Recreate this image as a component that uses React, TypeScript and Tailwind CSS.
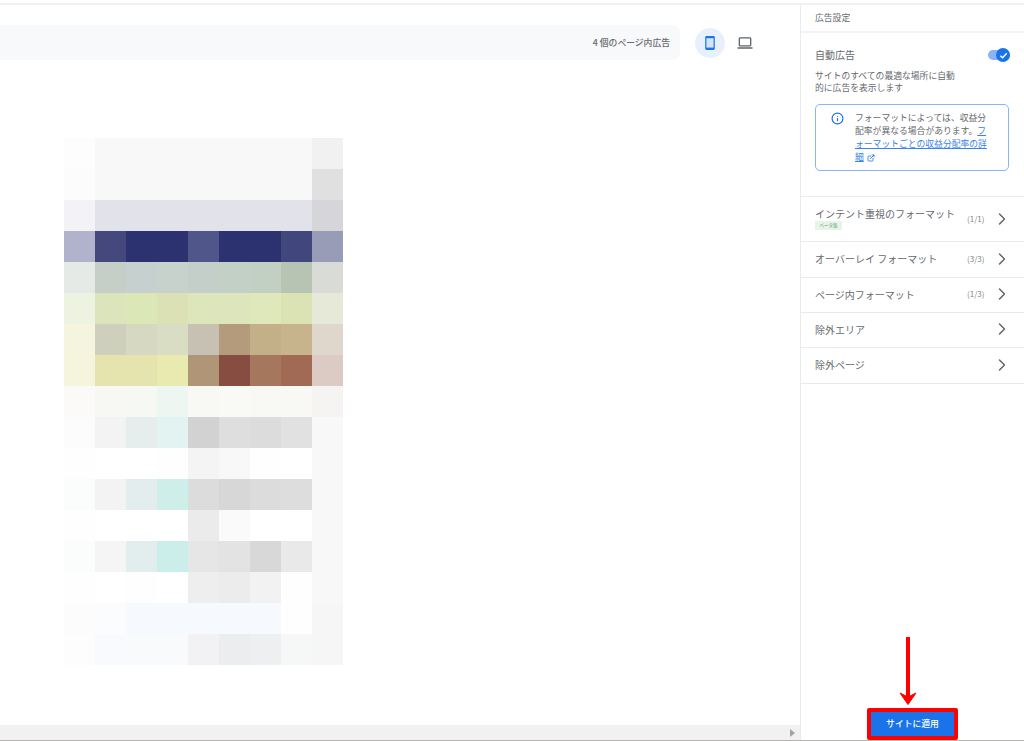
import { ChevronRight, ExternalLink, Info } from 'lucide-react';

const mosaic = [
  ['#fdfdfd', '#f8f8f8', '#f8f8f8', '#f8f8f8', '#f8f8f8', '#f8f8f8', '#f8f8f8', '#f8f8f8', '#f1f1f1'],
  ['#fcfcfc', '#f8f8f8', '#f8f8f8', '#f8f8f8', '#f8f8f8', '#f8f8f8', '#f8f8f8', '#f8f8f8', '#e0e0e0'],
  ['#f3f3f7', '#e2e3ea', '#e2e3ea', '#e2e3ea', '#e2e3ea', '#e2e3ea', '#e2e3ea', '#e2e3ea', '#d6d6da'],
  ['#b1b3cd', '#45487c', '#2c316f', '#2c316f', '#50558a', '#2c316f', '#2c316f', '#41467c', '#999cb6'],
  ['#e5eae7', '#c5cfc8', '#c6d0cf', '#c8d2cd', '#c3cfc8', '#c2d0c5', '#c2d0c3', '#b8c4b3', '#d9dcd6'],
  ['#eef2e0', '#dbe4bb', '#dce7b8', '#dbe0b5', '#dde6bb', '#dce5bb', '#dee8bb', '#dbe2b3', '#e6e9d8'],
  ['#f5f5df', '#cfcfbe', '#d7d8c1', '#d9ddc3', '#c7c1b4', '#b39b7c', '#c3af88', '#c7b48c', '#dfd7cb'],
  ['#f5f5dd', '#e6e4ae', '#e6e4ae', '#e8eab0', '#ae9676', '#874d40', '#a5785e', '#a06a55', '#dbcbc4'],
  ['#fbfaf8', '#f7f8f4', '#f6f8f4', '#eef6f2', '#f8f9f5', '#f9faf6', '#f8f9f5', '#f8f9f5', '#f5f4f3'],
  ['#fcfcfc', '#f3f3f3', '#e5eded', '#e2f3f2', '#d2d2d2', '#dedede', '#dcdcdc', '#e1e1e1', '#f8f8f8'],
  ['#fefefe', '#ffffff', '#ffffff', '#fefefe', '#f4f4f4', '#f8f8f8', '#fefefe', '#ffffff', '#f8f8f8'],
  ['#fbfdfc', '#f3f3f3', '#e3eded', '#cdeee9', '#dcdcdc', '#d7d7d7', '#dcdcdc', '#dddddd', '#f8f8f8'],
  ['#fefefe', '#ffffff', '#ffffff', '#ffffff', '#ebebeb', '#fafafa', '#ffffff', '#ffffff', '#f8f8f8'],
  ['#fbfdfc', '#f5f5f5', '#e2eded', '#cbeeea', '#e6e6e6', '#e3e3e3', '#d8d8d8', '#e9e9e9', '#f8f8f8'],
  ['#fefefe', '#ffffff', '#fefefe', '#ffffff', '#eeeeee', '#ececec', '#f2f2f2', '#fefefe', '#f8f8f8'],
  ['#fcfcfc', '#fbfcfe', '#f6f9fe', '#f6f9fe', '#f6f9fe', '#f6f9fe', '#f6f9fe', '#fefefe', '#f6f6f6'],
  ['#fdfdfd', '#f8fafd', '#f8fafc', '#f9fafc', '#f2f2f4', '#ecedef', '#eeeff1', '#f6f7f7', '#f6f6f6'],
];

const formatRows = [
  { label: 'オーバーレイ フォーマット', count: '(3/3)', height: 'h-[36px]' },
  { label: 'ページ内フォーマット', count: '(1/3)', height: 'h-[35px]' },
  { label: '除外エリア', count: '', height: 'h-[35px]' },
  { label: '除外ページ', count: '', height: 'h-[36px]' },
];

function Mosaic() {
  return (
    <svg width="279" height="527" viewBox="0 0 279 527" shapeRendering="crispEdges" className="ml-16 mt-[78px] block">
      {mosaic.map((row, y) =>
        row.map((color, x) => <rect key={`${x}-${y}`} x={x * 31} y={y * 31} width="31" height="31" fill={color} />),
      )}
    </svg>
  );
}

// material style phone, the inner screen is tinted
function PhoneIcon() {
  return (
    <svg width="18" height="18" viewBox="0 0 18 18">
      <rect x="4.2" y="2" width="9.6" height="14" rx="1.4" fill="#1a73e8" />
      <rect x="5.4" y="4.2" width="7.2" height="9.4" fill="#d2e3fc" />
    </svg>
  );
}

function LaptopIcon() {
  return (
    <svg width="16" height="16" viewBox="0 0 16 16" fill="none" stroke="#5f6368">
      <rect x="2.3" y="2.9" width="11.4" height="8" rx="0.8" strokeWidth="1.3" />
      <path d="M0.5 13H15.5" strokeWidth="1.5" />
    </svg>
  );
}

export default function App() {
  return (
    <div
      className="relative flex h-[741px] w-[1024px] flex-col overflow-hidden bg-white text-[#666a6e]"
      style={{ fontFamily: '"Noto Sans CJK JP", "Liberation Sans", sans-serif' }}
    >
      <div className="mt-[3px] h-[2px] bg-[#f1f1f1]" />
      <div className="flex min-h-0 flex-1">
        <div className="flex w-[800px] flex-col">
          <div className="mt-5 flex items-center">
            <div className="flex h-[35px] w-[680px] items-center justify-end rounded-r-lg bg-[#f8f9fa] pr-[10px] text-[8.8px] font-medium">
              4 個のページ内広告
            </div>
            <div className="ml-[15px] flex h-[30px] w-[30px] items-center justify-center rounded-full bg-[#e8f0fe]">
              <PhoneIcon />
            </div>
            <div className="ml-[12px]">
              <LaptopIcon />
            </div>
          </div>
          <Mosaic />
          <div className="mt-auto flex h-[15px] items-center justify-end bg-[#f1f1f1] pr-[5px]">
            <div className="h-0 w-0 border-y-[4px] border-l-[5px] border-y-transparent border-l-[#a3a3a3]" />
          </div>
        </div>

        <div className="flex w-[224px] flex-col border-l border-[#e8eaed]">
          <div className="flex h-[28px] items-center border-b-2 border-[#f1f3f4] pl-[14px] text-[8.8px]">広告設定</div>
          <div className="h-[164px] border-b border-[#e8eaed] pl-[14px] pr-[14px] pt-[14px]">
            <div className="flex items-center justify-between">
              <span className="text-[10px] leading-4">自動広告</span>
              <div className="relative h-[10px] w-[22px] rounded-full bg-[#8ab4f8]">
                <div className="absolute right-0 top-[-2px] flex h-[14px] w-[14px] items-center justify-center rounded-full bg-[#1a73e8]">
                  <svg width="9" height="9" viewBox="0 0 10 10" fill="none" stroke="white" strokeWidth="1.6">
                    <path d="M1.5 5.2 4 7.6 8.6 2.6" />
                  </svg>
                </div>
              </div>
            </div>
            <p className="mt-[7px] w-[145px] text-[8.8px] leading-3">サイトのすべての最適な場所に自動的に広告を表示します</p>
            <div className="mt-[10px] flex h-[67px] w-[194px] rounded-[5px] border border-[#8ab4f8] pl-[15px] pr-[18px] pt-[6px]">
              <Info size={13} strokeWidth={2.2} className="mt-[1px] shrink-0 text-[#1a73e8]" />
              <p className="ml-[11px] text-[8.8px] leading-[13px]">
                フォーマットによっては、収益分配率が異なる場合があります。
                <span className="text-[#3b82e8] underline">フォーマットごとの収益分配率の詳細</span>
                <ExternalLink size={8} strokeWidth={2.4} className="ml-[3px] inline text-[#1a73e8]" />
              </p>
            </div>
          </div>

          <div className="flex h-[45px] items-center border-b border-[#e8eaed] pl-[14px]">
            <div className="w-[148px]">
              <div className="text-[10px] leading-[12px]">インテント重視のフォーマット</div>
              <div className="mt-[1px] flex h-[9px] w-[27px] items-center justify-center bg-[#e6f4ea] text-[4.5px] text-[#5f9e74]">ベータ版</div>
            </div>
            <span className="ml-[4px] w-[25px] text-[8px] text-[#80868b]">(1/1)</span>
            <ChevronRight size={20} strokeWidth={1.7} className="text-[#5f6368]" />
          </div>
          {formatRows.map((row) => (
            <div key={row.label} className={`flex ${row.height} items-center border-b border-[#e8eaed] pb-[2px] pl-[14px]`}>
              <span className="w-[152px] text-[10px]">{row.label}</span>
              <span className="w-[25px] text-[8px] text-[#80868b]">{row.count}</span>
              <ChevronRight size={20} strokeWidth={1.7} className="text-[#5f6368]" />
            </div>
          ))}

          {/* red annotation frame round the button */}
          <div className="mt-auto ml-[66px] h-[32px] w-[91px] rounded-[2px] border-[4.5px] border-[#f00]">
            <div className="flex h-full items-center justify-center bg-[#1a73e8] text-[8.8px] font-medium text-white">
              サイトに適用
            </div>
          </div>
        </div>
      </div>
      <div className="h-px bg-[#b8b4ae]" />

      {/* annotation arrow */}
      <svg width="20" height="70" viewBox="0 0 20 70" className="absolute left-[898px] top-[636px]">
        <path d="M10 1V62" stroke="#f00" strokeWidth="4" />
        <path d="M2 57 10 68.5 18 57 10 61Z" fill="#f00" stroke="#f00" />
      </svg>
    </div>
  );
}
